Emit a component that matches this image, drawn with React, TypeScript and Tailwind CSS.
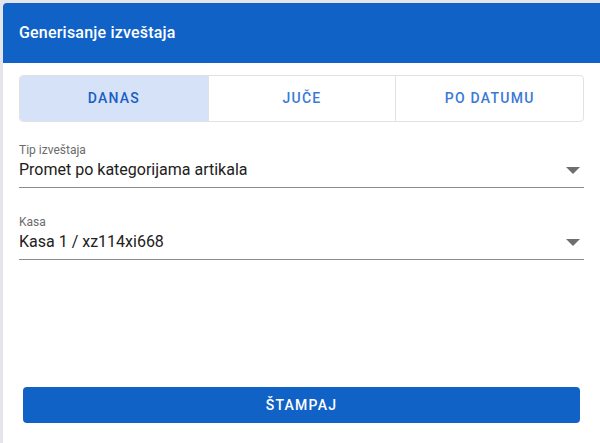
import React from "react";

function Arrow() {
  return (
    <svg width="14" height="7" viewBox="0 0 14 7" className="shrink-0">
      <path d="M0 0 L14 0 L7 7 Z" fill="#6f6f6f" />
    </svg>
  );
}

function Field({ label, value }: { label: string; value: string }) {
  return (
    <div className="flex flex-col border-b border-[#8c8c8c] pb-[5px]">
      <div className="text-[12px] leading-[16px] text-[#6b6b6b]">{label}</div>
      <div className="flex items-center justify-between h-[24px] pr-[4px]">
        <span className="text-[16px] leading-[24px] text-[#212121]">{value}</span>
        <Arrow />
      </div>
    </div>
  );
}

export default function App() {
  const tabs = ["DANAS", "JUČE", "PO DATUMU"];
  return (
    <div
      className="w-[600px] h-[443px] overflow-hidden bg-[#e4e4ec] pt-[3px] pl-[3px]"
      style={{ fontFamily: "Roboto, 'Liberation Sans', sans-serif" }}
    >
      <div className="w-[597px] h-[460px] bg-white rounded-tl-[4px] flex flex-col">
        <div className="h-[60px] bg-[#1162c7] rounded-tl-[4px] flex items-center px-4">
          <span className="text-white text-[16px] font-medium tracking-[0.2px]">Generisanje izveštaja</span>
        </div>
        <div className="px-4 pt-3">
          <div className="grid grid-cols-3 h-[47px] border border-[#e2e2e2] rounded-[4px] overflow-hidden">
            {tabs.map((t, i) => (
              <div
                key={t}
                className={
                  i === 0
                    ? "flex items-center justify-center bg-[#d6e2f7] text-[#1b5ec4] text-[14px] font-medium tracking-[1.25px]"
                    : "flex items-center justify-center border-l border-[#e2e2e2] text-[#3a7ad6] text-[14px] font-medium tracking-[1.25px]"
                }
              >
                {t}
              </div>
            ))}
          </div>
          <div className="mt-[20px] flex flex-col gap-[26px]">
            <Field label="Tip izveštaja" value="Promet po kategorijama artikala" />
            <Field label="Kasa" value="Kasa 1 / xz114xi668" />
          </div>
        </div>
        <div className="px-5 mt-[127px]">
          <div className="h-[36px] bg-[#1162c7] rounded-[4px] flex items-center justify-center text-white text-[14px] font-medium tracking-[1.25px]">
            ŠTAMPAJ
          </div>
        </div>
      </div>
    </div>
  );
}
